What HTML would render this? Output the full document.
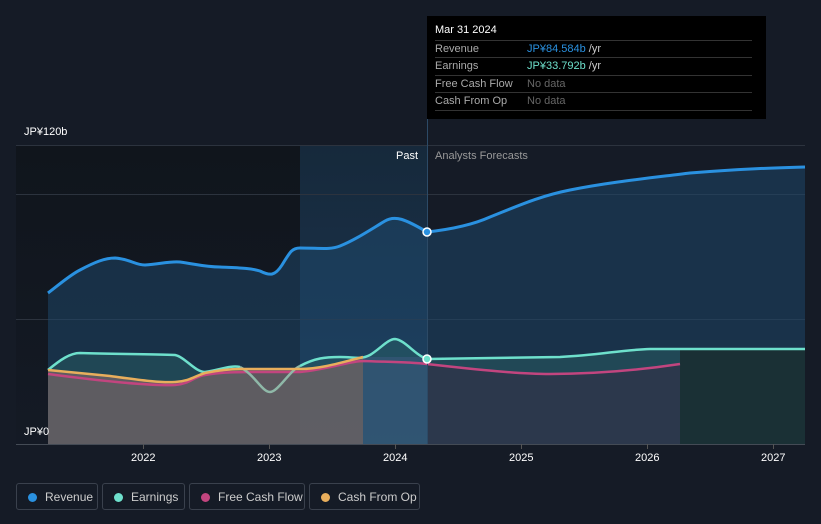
<!DOCTYPE html>
<html><head><style>
body{margin:0;background:#151b26;width:821px;height:524px;overflow:hidden;font-family:"Liberation Sans",sans-serif;position:relative}
.t{position:absolute;font-size:11px;color:#fff}
.tip{position:absolute;left:427px;top:16px;width:339px;height:103px;background:#000}
.tip .r{position:absolute;left:8px;width:317px;border-top:1px solid #333;height:17px;font-size:11px;color:#aaa;line-height:17px}
.leg{position:absolute;top:483px;height:27px;border:1px solid #3a414d;border-radius:3px;color:#ccc;font-size:12px;line-height:27px;box-sizing:border-box}
.leg i{position:absolute;left:11px;top:9px;width:9px;height:9px;border-radius:50%}
.leg span{position:absolute;left:28px}
</style></head><body>
<svg width="821" height="524" style="position:absolute;left:0;top:0">
<defs>
<linearGradient id="pb" x1="0" y1="0" x2="0" y2="1"><stop offset="0" stop-color="#10151c"/><stop offset="1" stop-color="#141a25"/></linearGradient>
<linearGradient id="hb" x1="0" y1="0" x2="0" y2="1"><stop offset="0" stop-color="#16293b"/><stop offset="1" stop-color="#1c3652"/></linearGradient>
</defs>
<rect x="16" y="145" width="284" height="299" fill="url(#pb)"/>
<rect x="300" y="145" width="127" height="299" fill="url(#hb)"/>
<g stroke="#2c333e" stroke-width="1">
<line x1="16" y1="145.5" x2="805" y2="145.5"/><line x1="16" y1="194.5" x2="805" y2="194.5"/><line x1="16" y1="319.5" x2="805" y2="319.5"/><line x1="16" y1="444.5" x2="805" y2="444.5" stroke="#444b55"/>
</g>
<path d="M48,293 C60,284 70,275 80,270 C95,262 105,258 115,258 C130,259 135,265 145,265 C160,264 170,261 180,262 C195,264 205,267 220,267 C240,268 250,268 260,271 C270,276 275,276 282,265 C290,252 292,248 300,248 C320,248 330,250 340,246 C355,240 370,230 385,221 C395,215 405,219 427,232 C445,230 470,226 490,217 C520,205 540,196 570,190 C610,182 650,178 690,173 C740,169 770,168 805,167 L805,444 L48,444Z" fill="#1e4a6e" fill-opacity="0.5"/>
<path d="M48,370 C60,360 70,353 80,353 C110,354 150,354 175,355 C185,357 195,372 205,372 C220,370 230,365 240,367 C255,375 262,392 270,392 C278,392 290,370 300,366 C315,358 325,357 340,357 C355,357 360,360 370,355 C380,349 388,339 395,339 C405,340 415,355 427,359 L560,357 C600,355 620,350 650,349 L805,349 L805,444 L48,444Z" fill="#2e6a6a" fill-opacity="0.4"/>
<path d="M48,370 C70,372 90,374 110,376 C140,380 160,383 175,382 C190,381 195,376 205,373 C220,370 230,369 240,369 L300,369 C320,369 340,363 363,357 L363,444 L48,444Z" fill="#6e6264" fill-opacity="0.8"/>
<rect x="363" y="357" width="64" height="87" fill="#3d5a80" fill-opacity="0.55"/>
<path d="M427,364 C480,370 520,374 550,374 C600,374 640,370 680,364 L680,444 L427,444Z" fill="#30344a" fill-opacity="0.8"/>
<path d="M680,349 L805,349 L805,444 L680,444Z" fill="#1a3035"/>
<path d="M48,293 C60,284 70,275 80,270 C95,262 105,258 115,258 C130,259 135,265 145,265 C160,264 170,261 180,262 C195,264 205,267 220,267 C240,268 250,268 260,271 C270,276 275,276 282,265 C290,252 292,248 300,248 C320,248 330,250 340,246 C355,240 370,230 385,221 C395,215 405,219 427,232 C445,230 470,226 490,217 C520,205 540,196 570,190 C610,182 650,178 690,173 C740,169 770,168 805,167" fill="none" stroke="#2a91e0" stroke-width="3"/>
<path d="M48,374 C80,378 140,386 175,385 C190,384 195,376 205,375 C220,372 240,372 260,372 L300,372 C330,369 350,361 363,361 C390,362 410,362 427,364 C480,370 520,374 550,374 C600,374 640,370 680,364" fill="none" stroke="#c2457f" stroke-width="2.5"/>
<path d="M48,370 C60,360 70,353 80,353 C110,354 150,354 175,355 C185,357 195,372 205,372 C220,370 230,365 240,367" fill="none" stroke="#6ee0cc" stroke-width="2.5"/>
<path d="M240,367 C255,375 262,392 270,392 C278,392 290,370 300,366" fill="none" stroke="#8fb8a8" stroke-width="2.5"/>
<path d="M300,366 C315,358 325,357 340,357 C355,357 360,360 370,355 C380,349 388,339 395,339 C405,340 415,355 427,359 L560,357 C600,355 620,350 650,349 L805,349" fill="none" stroke="#6ee0cc" stroke-width="2.5"/>
<path d="M48,370 C70,372 90,374 110,376 C140,380 160,383 175,382 C190,381 195,376 205,373 C220,370 230,369 240,369 L300,369 C320,369 340,363 363,357" fill="none" stroke="#e8ae5c" stroke-width="2.5"/>
<line x1="427.5" y1="16" x2="427.5" y2="444" stroke="#2c4a66"/>
<circle cx="427" cy="232" r="4" fill="#2a91e0" stroke="#fff" stroke-width="1.5"/>
<circle cx="427" cy="359" r="4" fill="#6ee0cc" stroke="#fff" stroke-width="1.5"/>
<g stroke="#555" ><line x1="143.5" y1="444" x2="143.5" y2="449"/><line x1="269.5" y1="444" x2="269.5" y2="449"/><line x1="395.5" y1="444" x2="395.5" y2="449"/><line x1="521.5" y1="444" x2="521.5" y2="449"/><line x1="647.5" y1="444" x2="647.5" y2="449"/><line x1="773.5" y1="444" x2="773.5" y2="449"/></g>
</svg>
<div class="t" style="left:24px;top:126px">JP¥120b</div>
<div class="t" style="left:24px;top:426px">JP¥0</div>
<div class="t" style="left:396px;top:150px">Past</div>
<div class="t" style="left:435px;top:150px;color:#999">Analysts Forecasts</div>
<div class="t" style="left:131px;top:452px">2022</div>
<div class="t" style="left:257px;top:452px">2023</div>
<div class="t" style="left:383px;top:452px">2024</div>
<div class="t" style="left:509px;top:452px">2025</div>
<div class="t" style="left:635px;top:452px">2026</div>
<div class="t" style="left:761px;top:452px">2027</div>
<div class="tip">
<div style="position:absolute;left:8px;top:8px;color:#fff;font-size:11px">Mar 31 2024</div>
<div class="r" style="top:24px">Revenue<span style="position:absolute;left:92px;color:#2a91e0">JP¥84.584b <span style="color:#ccc">/yr</span></span></div>
<div class="r" style="top:41px">Earnings<span style="position:absolute;left:92px;color:#6ee0cc">JP¥33.792b <span style="color:#ccc">/yr</span></span></div>
<div class="r" style="top:59px">Free Cash Flow<span style="position:absolute;left:92px;color:#666">No data</span></div>
<div class="r" style="top:76px;border-bottom:1px solid #333">Cash From Op<span style="position:absolute;left:92px;color:#666">No data</span></div>
</div>
<div class="leg" style="left:16px;width:82px"><i style="background:#2a91e0"></i><span>Revenue</span></div>
<div class="leg" style="left:102px;width:83px"><i style="background:#6ee0cc"></i><span>Earnings</span></div>
<div class="leg" style="left:189px;width:116px"><i style="background:#c2457f"></i><span>Free Cash Flow</span></div>
<div class="leg" style="left:309px;width:111px"><i style="background:#e8ae5c"></i><span>Cash From Op</span></div>
</body></html>
